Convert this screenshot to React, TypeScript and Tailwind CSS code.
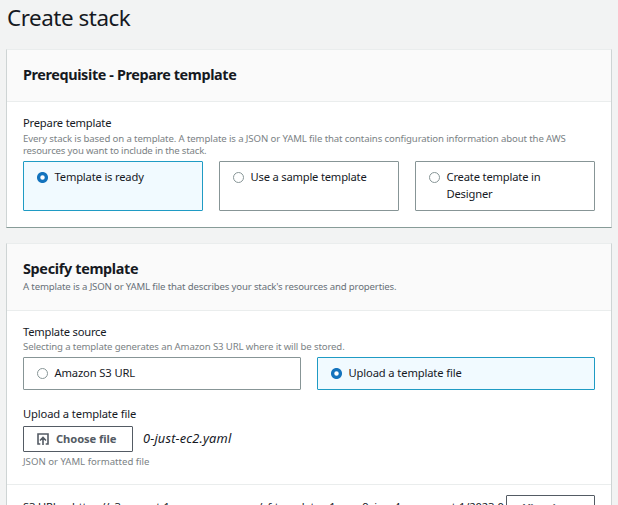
import React from 'react';

function Radio({ checked = false }: { checked?: boolean }) {
  return (
    <svg className="mt-1 h-[11px] w-[11px] shrink-0" viewBox="0 0 11 11">
      {checked ? (
        <circle cx="5.5" cy="5.5" r="3.9" fill="#fff" stroke="#1373bd" strokeWidth="3.3" />
      ) : (
        <circle cx="5.5" cy="5.5" r="5" fill="#fff" stroke="#879596" strokeWidth="1" />
      )}
    </svg>
  );
}

function Tile({ checked = false, className = '', children }: { checked?: boolean; className?: string; children: React.ReactNode }) {
  return (
    <label
      className={`flex flex-1 gap-[6.5px] rounded-[1px] border pl-[13px] pr-3 pt-[6px] text-[11.2px] leading-[17px] ${
        checked ? 'border-[#1f9bc4] bg-[#f1faff]' : 'border-[#879596] bg-white'
      } ${className}`}
    >
      <Radio checked={checked} />
      <span>{children}</span>
    </label>
  );
}

function Panel({ className = '', children }: { className?: string; children: React.ReactNode }) {
  return (
    <section className={`mx-[6px] border border-x-[#ced4d4] border-t-[#eaeded] border-b-[#879c98] bg-white ${className}`}>
      {children}
    </section>
  );
}

export default function App() {
  return (
    <main className="h-[505px] w-[618px] overflow-hidden bg-[#f2f3f3] font-['Noto_Sans',sans-serif] text-[#16191f]">
      <h1 className="ml-[7px] h-[49px] pt-[3px] text-[22.4px] leading-[29px] tracking-[-0.45px]">Create stack</h1>

      <Panel className="h-[179px]">
        <header className="h-[52px] border-b border-[#eaeded] bg-[#fafafa] px-4 pt-4">
          <h2 className="text-[14.4px] font-bold leading-[18px] tracking-[-0.38px]">Prerequisite - Prepare template</h2>
        </header>
        <div className="px-4 pt-3">
          <div className="text-[11.2px] leading-[18px] tracking-[-0.2px]">Prepare template</div>
          <p className="mt-px whitespace-nowrap text-[9.6px] leading-[12px] tracking-[-0.11px] text-[#7b8285]">
            Every stack is based on a template. A template is a JSON or YAML file that contains configuration information about the AWS
            <br />
            <span className="tracking-[-0.18px]">resources you want to include in the stack.</span>
          </p>
          <div className="mt-1 flex gap-4">
            <Tile checked className="h-[50px] tracking-[-0.18px]">Template is ready</Tile>
            <Tile className="h-[50px] tracking-[-0.2px]">Use a sample template</Tile>
            <Tile className="h-[50px] tracking-[-0.18px]">Create template in Designer</Tile>
          </div>
        </div>
      </Panel>

      <Panel className="mt-[15px] h-[300px]">
        <header className="h-[67px] border-b border-[#eaeded] bg-[#fafafa] px-4 pt-4">
          <h2 className="text-[14.4px] font-bold leading-[18px] tracking-[-0.33px]">Specify template</h2>
          <p className="mt-[2px] text-[9.6px] leading-[14px] tracking-[-0.15px] text-[#687078]">
            A template is a JSON or YAML file that describes your stack's resources and properties.
          </p>
        </header>
        <div className="h-[174px] border-b border-[#eaeded] px-4 pt-3">
          <div className="text-[11.2px] leading-[17px] tracking-[-0.22px]">Template source</div>
          <p className="mt-px text-[9.6px] leading-[12px] tracking-[-0.125px] text-[#7b8285]">
            Selecting a template generates an Amazon S3 URL where it will be stored.
          </p>
          <div className="mt-1 flex gap-4">
            <Tile className="h-[33px] tracking-[-0.13px]">Amazon S3 URL</Tile>
            <Tile checked className="h-[33px] tracking-[-0.13px]">Upload a template file</Tile>
          </div>
          <div className="mt-[15px] text-[11.2px] leading-[17px] tracking-[-0.13px]">Upload a template file</div>
          <div className="mt-1 flex items-center">
            <button className="flex h-[26px] w-[110px] items-center rounded-[1px] border border-[#545b64] pl-[13px] text-[11.2px] font-bold tracking-[-0.1px] text-[#545b64]">
              <svg className="mr-[7px] h-3 w-3" viewBox="0 0 12 12" fill="none" stroke="currentColor" strokeWidth="1.6">
                <path d="M3.3 11H1V1H11V11H8.7M6 12V4.6M3 7.5L6 4.5L9 7.5" />
              </svg>
              <span>Choose file</span>
            </button>
            <span className="-mt-[3px] ml-[10px] text-[12.8px] italic leading-5 tracking-[0.17px]">0-just-ec2.yaml</span>
          </div>
          <div className="mt-1 text-[9.6px] leading-[12px] text-[#7b8285]">JSON or YAML formatted file</div>
        </div>
        <div className="flex px-4 pt-[10px]">
          <div className="flex w-[483px] overflow-hidden whitespace-nowrap pt-[3px] text-[11.2px] leading-[17px] tracking-[-0.17px]">
            <span className="w-[49px] shrink-0">S3 URL:</span>
            <span>https://s3.us-east-1.amazonaws.com/cf-templates-1wvag9xjmo4wn-us-east-1/2023-0</span>
          </div>
          <button className="flex h-[26px] w-[89px] items-start rounded-[1px] border border-[#545b64] pl-4 pt-[3px] text-[11.2px] font-bold leading-[17px] text-[#545b64]">
            View in
          </button>
        </div>
      </Panel>
    </main>
  );
}
